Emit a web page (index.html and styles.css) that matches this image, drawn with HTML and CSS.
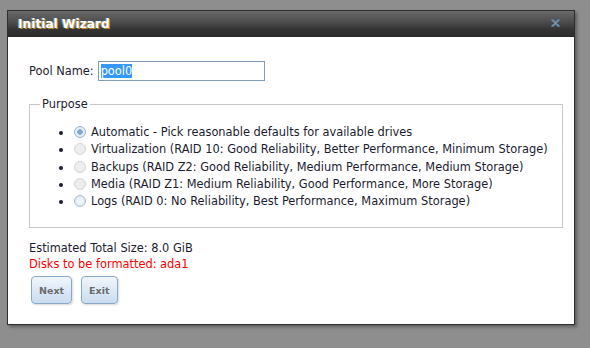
FILE: index.html
```html
<!DOCTYPE html>
<html lang="en">
<head>
  <meta charset="UTF-8">
  <title>Initial Wizard</title>
  <link rel="stylesheet" href="styles.css">
</head>
<body>
  <div class="dialog">
    <div class="dialog-title">
      <span class="title-text">Initial Wizard</span>
      <span class="close-btn">
        <svg width="9" height="8" viewBox="0 0 9 8">
          <path d="M1.5 1 L7.5 7 M7.5 1 L1.5 7" stroke="#55738c" stroke-width="2.6" stroke-linecap="round"/>
          <path d="M1.5 1 L7.5 7 M7.5 1 L1.5 7" stroke="#8fa8bc" stroke-width="1" stroke-linecap="round"/>
        </svg>
      </span>
    </div>
    <div class="dialog-body">
      <div class="pool-row">
        <label for="pool">Pool Name:</label>
        <div class="pool-input"><span class="selected-text">pool0</span></div>
      </div>

      <fieldset class="purpose">
        <legend>Purpose</legend>
        <ul>
          <li><span class="radio checked"></span>Automatic - Pick reasonable defaults for available drives</li>
          <li><span class="radio disabled"></span>Virtualization (RAID 10: Good Reliability, Better Performance, Minimum Storage)</li>
          <li><span class="radio disabled"></span>Backups (RAID Z2: Good Reliability, Medium Performance, Medium Storage)</li>
          <li><span class="radio disabled"></span>Media (RAID Z1: Medium Reliability, Good Performance, More Storage)</li>
          <li><span class="radio"></span>Logs (RAID 0: No Reliability, Best Performance, Maximum Storage)</li>
        </ul>
      </fieldset>

      <div class="summary">
        <p>Estimated Total Size: 8.0 GiB</p>
        <p class="warn">Disks to be formatted: ada1</p>
      </div>

      <div class="buttons">
        <button class="btn">Next</button>
        <button class="btn">Exit</button>
      </div>
    </div>
  </div>
</body>
</html>
```

FILE: styles.css
```css
html, body {
  margin: 0;
  height: 100%;
}

body {
  background-color: #8e8e8e;
  font-family: 'DejaVu Sans', Verdana, sans-serif;
  font-size: 11.4px;
  color: #1c1c30;
  padding: 10px 0 0 7px;
  box-sizing: border-box;
}

.dialog {
  width: 568px;
  height: 315px;
  box-sizing: border-box;
  border: 1px solid #2f2f2f;
  background: #fff;
  box-shadow: 2px 2px 3px rgba(0,0,0,0.35);
}

.dialog-title {
  height: 26px;
  display: flex;
  align-items: center;
  justify-content: space-between;
  padding: 0 14px 0 10px;
  background: linear-gradient(to bottom, #6a6a6a 0%, #4a4a4a 45%, #343434 70%, #2a2a2a 100%);
}

.title-text {
  font-family: 'DejaVu Sans', Verdana, sans-serif;
  font-weight: bold;
  font-size: 12.2px;
  color: #fff;
  text-shadow: 1px 1px 0 #c08a2a, -1px 0 1px #6fa8e0;
}

.close-btn {
  display: flex;
  margin-top: -3px;
}

.dialog-body {
  padding: 24px 11px 0 21px;
}

.pool-row {
  display: flex;
  align-items: center;
}

.pool-row label {
  margin-right: 4px;
}

.pool-input {
  width: 163px;
  height: 18px;
  border: 1px solid #7f9db9;
  display: flex;
  align-items: center;
  padding-left: 2px;
}

.selected-text {
  background: #3399ff;
  color: #fff;
  line-height: 14px;
}

.purpose {
  margin: 16px 0 0 0;
  padding: 13px 0 17px 10px;
  border: 1px solid #c8c8c8;
}

.purpose legend {
  padding: 0 2px;
}

.purpose ul {
  margin: 0;
  padding-left: 33px;
  list-style: disc;
}

.purpose li {
  height: 17.3px;
  line-height: 17px;
  white-space: nowrap;
}

.radio {
  display: inline-block;
  width: 12px;
  height: 12px;
  border-radius: 50%;
  border: 1px solid #c4c4c4;
  background: #ececec;
  vertical-align: -2px;
  margin: 0 5px 0 1px;
  box-sizing: border-box;
}

.radio.checked {
  border-color: #9ab3cc;
  background: radial-gradient(circle, #7fa9d4 0 2.5px, #e6eef6 3px);
}

.radio.disabled {
  border-color: #d6d6d6;
  background: #ededed;
}

.radio:not(.checked):not(.disabled) {
  border-color: #a9bfd4;
  background: radial-gradient(circle, #eef3f8 0 3px, #dfe8f1 4px);
}

.summary {
  margin-top: 12px;
}

.summary p {
  margin: 0;
  line-height: 16px;
}

.warn {
  color: #ff0000;
}

.buttons {
  display: flex;
  gap: 9px;
  margin-top: 4px;
  padding-left: 2px;
}

.btn {
  font-family: 'DejaVu Sans', Verdana, sans-serif;
  font-size: 9.5px;
  font-weight: bold;
  color: #6b6b6b;
  height: 28px;
  padding: 0 7px;
  border: 1px solid #8aa8c8;
  border-radius: 4px;
  background: linear-gradient(to bottom, #f0f6fc, #c9dcf0);
  box-shadow: 1px 1px 2px rgba(0,0,0,0.15);
}
```
